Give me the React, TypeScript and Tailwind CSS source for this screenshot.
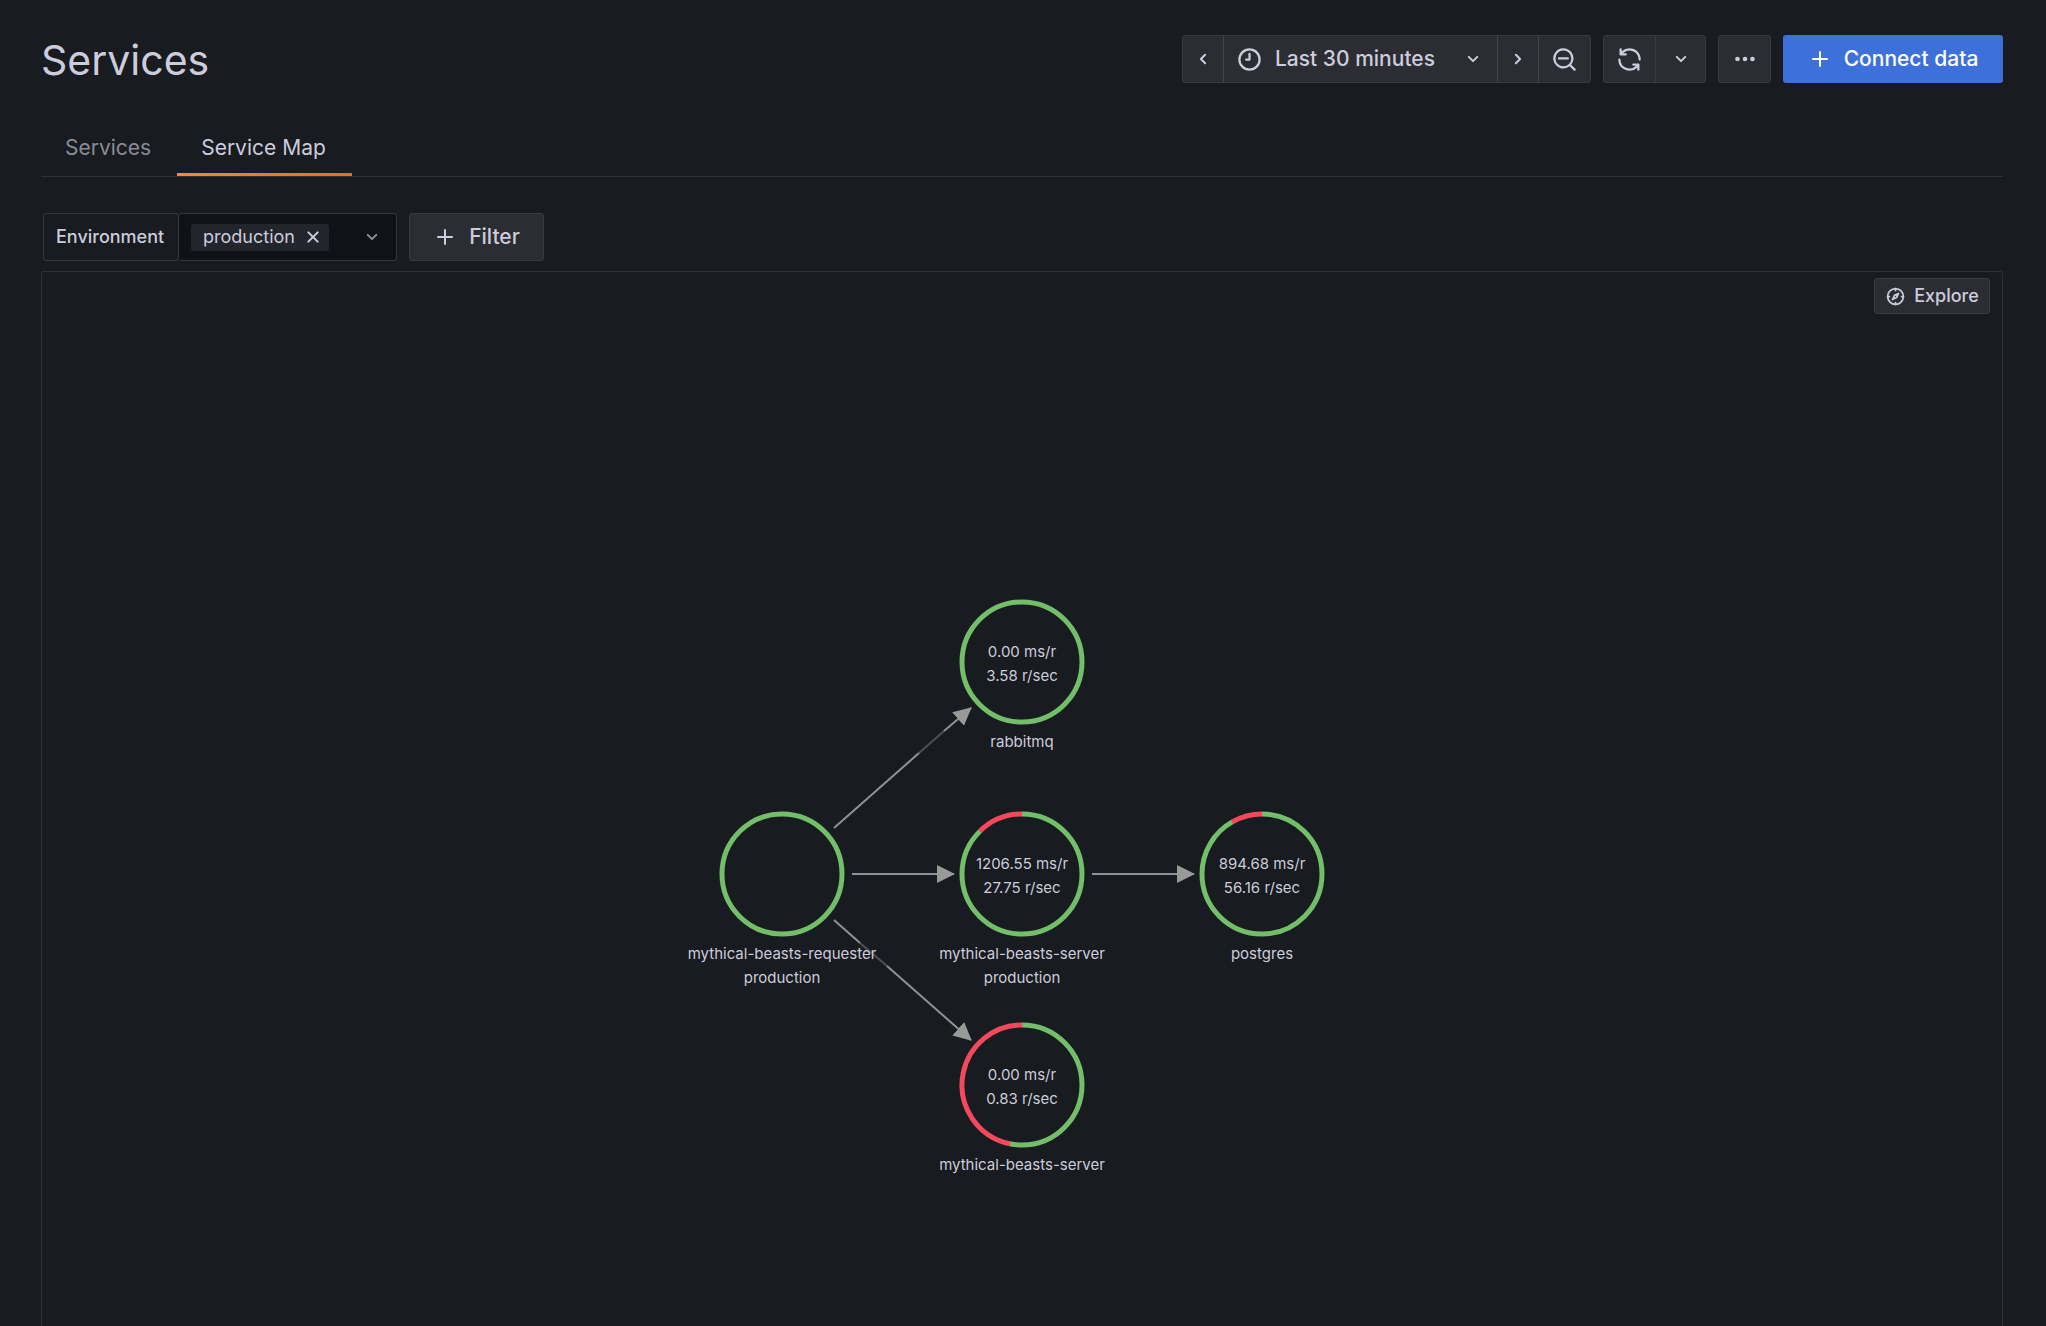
import React from "react";

const base = { fill: "currentColor", viewBox: "0 0 24 24", "aria-hidden": true } as const;

const AngleLeft = ({ className }: { className: string }) => (
  <svg {...base} className={className}>
    <path d="M11.29 12l3.54-3.54a1 1 0 0 0 0-1.41 1 1 0 0 0-1.42 0l-4.24 4.24a1 1 0 0 0 0 1.42L13.41 17a1 1 0 0 0 .71.29 1 1 0 0 0 .71-.29 1 1 0 0 0 0-1.41z" />
  </svg>
);
const AngleRight = ({ className }: { className: string }) => (
  <svg {...base} className={className}>
    <path d="M14.83 11.29L10.59 7.05a1 1 0 0 0-1.42 0 1 1 0 0 0 0 1.41L12.71 12l-3.54 3.54a1 1 0 0 0 0 1.41 1 1 0 0 0 .71.29 1 1 0 0 0 .71-.29l4.24-4.24a1 1 0 0 0 0-1.42z" />
  </svg>
);
const AngleDown = ({ className }: { className: string }) => (
  <svg {...base} className={className}>
    <path d="M17 9.17a1 1 0 0 0-1.41 0L12 12.71 8.46 9.17a1 1 0 0 0-1.41 0 1 1 0 0 0 0 1.42l4.24 4.24a1 1 0 0 0 1.42 0L17 10.59a1 1 0 0 0 0-1.42z" />
  </svg>
);
const Clock = ({ className }: { className: string }) => (
  <svg {...base} className={className}>
    <path d="M12 6a.99.99 0 0 0-1 1v4H9a1 1 0 0 0 0 2h3a1 1 0 0 0 1-1V7a1 1 0 0 0-1-1zm0-4a10 10 0 1 0 10 10A10 10 0 0 0 12 2zm0 18a8 8 0 1 1 8-8 8 8 0 0 1-8 8z" />
  </svg>
);
const ZoomOut = ({ className }: { className: string }) => (
  <svg {...base} className={className}>
    <path d="M21.71 20.29L18 16.61A9 9 0 1 0 16.61 18l3.68 3.68a1 1 0 0 0 1.42 0 1 1 0 0 0 0-1.39zM11 18a7 7 0 1 1 7-7 7 7 0 0 1-7 7zm4-8H7a1 1 0 0 0 0 2h8a1 1 0 0 0 0-2z" />
  </svg>
);
const Sync = ({ className }: { className: string }) => (
  <svg {...base} className={className}>
    <path d="M19.91 15.51h-4.53a1 1 0 0 0 0 2h2.4A8 8 0 0 1 4 12a1 1 0 0 0-2 0 10 10 0 0 0 16.88 7.23V21a1 1 0 0 0 2 0v-4.5a1 1 0 0 0-.97-.99zM12 2a10 10 0 0 0-6.88 2.77V3a1 1 0 0 0-2 0v4.5a1 1 0 0 0 1 1h4.5a1 1 0 0 0 0-2h-2.4A8 8 0 0 1 20 12a1 1 0 0 0 2 0A10 10 0 0 0 12 2z" />
  </svg>
);
const Ellipsis = ({ className }: { className: string }) => (
  <svg {...base} className={className}>
    <circle cx="4.5" cy="12" r="2.3" />
    <circle cx="12" cy="12" r="2.3" />
    <circle cx="19.5" cy="12" r="2.3" />
  </svg>
);
const Plus = ({ className }: { className: string }) => (
  <svg {...base} className={className}>
    <path d="M19 11h-6V5a1 1 0 0 0-2 0v6H5a1 1 0 0 0 0 2h6v6a1 1 0 0 0 2 0v-6h6a1 1 0 0 0 0-2z" />
  </svg>
);
const Times = ({ className }: { className: string }) => (
  <svg {...base} className={className} fill="none" stroke="currentColor" strokeWidth="3" strokeLinecap="round">
    <path d="M5 5l14 14M19 5L5 19" />
  </svg>
);
const Compass = ({ className }: { className: string }) => (
  <svg {...base} className={className} fill="none" stroke="currentColor" strokeWidth="2" strokeLinecap="round" strokeLinejoin="round">
    <circle cx="12" cy="12" r="9" />
    <path d="M12 3v2M12 19v2M3 12h2M19 12h2" />
    <path d="M15.5 8.5l-4.6 2.2-2.4 4.8 4.7-2.3z" />
  </svg>
);

type NodeData = {
  x: number;
  y: number;
  failed: number;
  stats: string[];
  labels: string[];
};

const nodes: NodeData[] = [
  { x: 322, y: 262, failed: 0, stats: [], labels: ["mythical-beasts-requester", "production"] },
  { x: 562, y: 50, failed: 0, stats: ["0.00 ms/r", "3.58 r/sec"], labels: ["rabbitmq"] },
  { x: 562, y: 262, failed: 0.124, stats: ["1206.55 ms/r", "27.75 r/sec"], labels: ["mythical-beasts-server", "production"] },
  { x: 802, y: 262, failed: 0.083, stats: ["894.68 ms/r", "56.16 r/sec"], labels: ["postgres"] },
  { x: 562, y: 473, failed: 0.468, stats: ["0.00 ms/r", "0.83 r/sec"], labels: ["mythical-beasts-server"] },
];

const R = 60;
const C = 2 * Math.PI * R;

function ServiceNode({ x, y, failed, stats, labels }: NodeData) {
  return (
    <g transform={`translate(${x} ${y})`}>
      <g fill="none" strokeWidth="5">
        <circle
          r={R}
          stroke="#73bf69"
          strokeDasharray={failed > 0 ? `${(1 - failed) * C} ${C}` : undefined}
          transform="rotate(-90)"
        />
        {failed > 0 && (
          <circle
            r={R}
            stroke="#f2495c"
            strokeDasharray={`${failed * C} ${C}`}
            transform={`rotate(${-90 - failed * 360})`}
          />
        )}
      </g>
      {stats.map((s, i) => (
        <text key={s} textAnchor="middle" y={-5 + i * 24}>{s}</text>
      ))}
      {labels.map((l, i) => (
        <text key={l} textAnchor="middle" y={85 + i * 24}>{l}</text>
      ))}
    </g>
  );
}

function ServiceGraph() {
  return (
    <svg
      className="h-[600px] w-[1124px] shrink-0 overflow-visible font-['Inter'] text-[15px]"
      viewBox="0 0 1124 600"
      fill="#ccccdc"
      role="img"
      aria-label="Service map"
    >
      <defs>
        <marker id="arrow" viewBox="0 0 18 18" refX="17" refY="9" markerWidth="18" markerHeight="18" markerUnits="userSpaceOnUse" orient="auto">
          <path d="M0 0L18 9L0 18z" fill="#999999" />
        </marker>
      </defs>
      <g fill="none" stroke="#919192" strokeWidth="2">
        <path d="M392 262H494" markerEnd="url(#arrow)" />
        <path d="M632 262H734" markerEnd="url(#arrow)" />
        <path d="M374 216L459 141" />
        <path d="M459 141L484 119" opacity="0.45" />
        <path d="M484 119L511 96" markerEnd="url(#arrow)" />
        <path d="M374 308L400 331" />
        <path d="M400 331L427 354" opacity="0.45" />
        <path d="M427 354L511 428" markerEnd="url(#arrow)" />
      </g>
      {nodes.map((n) => (
        <ServiceNode key={`${n.x}-${n.y}`} {...n} />
      ))}
    </svg>
  );
}

export default function App() {
  return (
    <div className="flex h-screen flex-col overflow-hidden bg-[#181b1f] pt-[35px] pr-[43px] pl-[41px] font-['Inter',sans-serif] text-[#ccccdc]">
      <header className="flex h-12 items-center justify-between">
        <h1 className="pt-[2px] text-[41px] leading-[48px]">Services</h1>
        <div className="flex gap-3 text-[21px] font-medium">
          <div className="flex h-12 divide-x divide-[#44454a] rounded-[3px] border border-[#3a3b40] bg-[#2c2d32]">
            <button className="flex w-[41px] items-center justify-center" aria-label="Move time range backwards">
              <AngleLeft className="size-6" />
            </button>
            <button className="flex w-[274px] items-center pl-3">
              <Clock className="size-[27px]" />
              <span className="ml-3 flex-1 text-left">Last 30 minutes</span>
              <AngleDown className="mr-3 size-6" />
            </button>
            <button className="flex w-[41px] items-center justify-center" aria-label="Move time range forwards">
              <AngleRight className="size-6" />
            </button>
            <button className="flex w-[51px] items-center justify-center" aria-label="Zoom out time range">
              <ZoomOut className="size-[27px]" />
            </button>
          </div>
          <div className="flex h-12 divide-x divide-[#3a3b40] rounded-[3px] border border-[#3a3b40] bg-[#2c2d32]">
            <button className="flex w-[52px] items-center justify-center" aria-label="Refresh">
              <Sync className="size-[27px]" />
            </button>
            <button className="flex w-[49px] items-center justify-center" aria-label="Set auto refresh interval">
              <AngleDown className="size-6" />
            </button>
          </div>
          <button className="flex h-12 w-[53px] items-center justify-center rounded-[3px] border border-[#3a3b40] bg-[#2c2d32]" aria-label="More options">
            <Ellipsis className="size-6" />
          </button>
          <button className="flex h-12 w-[220px] items-center justify-center gap-3 rounded-[3px] bg-[#3d71d9] text-white">
            <Plus className="size-6" />
            Connect data
          </button>
        </div>
      </header>

      <nav className="mt-8 flex h-[62px] border-b border-[#2f3136] text-[21px]">
        <a href="#services" className="flex items-center pt-1 pr-[26px] pl-6 text-[#8a8b95]">
          Services
        </a>
        <a href="#service-map" aria-current="page" className="relative flex items-center pt-1 pr-[26px] pl-6">
          Service Map
          <span className="absolute inset-x-0 bottom-0 h-[3px] bg-linear-to-r from-[#ff8833] to-[#f55f3e]" />
        </a>
      </nav>

      <div className="mt-9 ml-[2px] flex h-12">
        <label htmlFor="environment" className="flex w-[136px] items-center rounded-[3px] border border-[#36373c] pl-3 text-lg font-medium">
          Environment
        </label>
        <div className="flex w-[218px] items-center rounded-[3px] border border-l-0 border-[#36373c] bg-[#111217] pr-3 pl-3">
          <span className="flex h-[27px] items-center rounded-[3px] bg-[#22252b] pr-2 pl-3 text-lg">
            production
            <button className="ml-[10px] flex items-center" aria-label="Remove production">
              <Times className="size-4" />
            </button>
          </span>
          <input id="environment" className="w-2 min-w-0 flex-1 bg-transparent outline-none" />
          <AngleDown className="size-6 text-[#8e8e9a]" />
        </div>
        <button className="ml-3 flex w-[135px] items-center justify-center gap-3 rounded-[3px] border border-[#3a3b40] bg-[#2c2d32] text-[21px] font-medium">
          <Plus className="size-6" />
          Filter
        </button>
      </div>

      <section className="mt-[10px] flex flex-1 flex-col rounded-t-[3px] border border-b-0 border-[#2f3136]">
        <div className="flex justify-end pt-[6px] pr-3">
          <button className="flex h-9 w-[116px] items-center justify-center gap-2 rounded-[3px] border border-[#3a3b40] bg-[#2c2d32] text-lg font-medium">
            <Compass className="size-[21px]" />
            Explore
          </button>
        </div>
        <div className="mt-[298px] flex justify-center">
          <ServiceGraph />
        </div>
      </section>
    </div>
  );
}
